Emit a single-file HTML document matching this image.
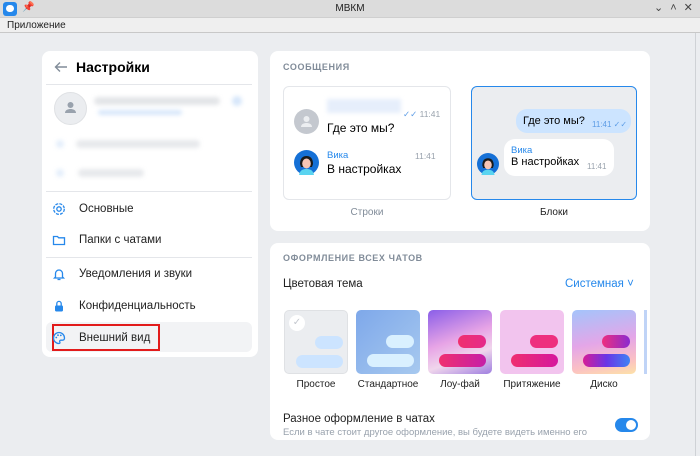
<!DOCTYPE html>
<html><head><meta charset="utf-8"><style>
*{box-sizing:border-box;margin:0;padding:0}
body{width:700px;height:456px;overflow:hidden;font-family:"Liberation Sans","DejaVu Sans",sans-serif;background:#ebedf0;position:relative;color:#000}
.abs{position:absolute}
.title{left:0;top:0;width:700px;height:18px;background:#dcdcdc;border-bottom:1px solid #cfcfcf}
.menu{left:0;top:18px;width:700px;height:15px;background:#efefef;border-bottom:1px solid #c8c8c8;font-size:10px;color:#222;padding:2px 7px}
.card{background:#fff;border-radius:8px}
.sec{font-size:9px;font-weight:bold;color:#818c99;letter-spacing:.6px}
.item{left:52px;font-size:11.5px;color:#222;display:flex;align-items:center;gap:13px}
.item svg{width:14px;height:14px}
.hr{height:1px;background:#e4e6ea}
.th{width:64px;height:64px;border-radius:5px;top:310px;overflow:hidden}
.pill{position:absolute;border-radius:8px;height:13px}
.lbl{font-size:10px;color:#222;top:379px;width:80px;text-align:center}
</style></head><body>
<div class="abs title">
 <div class="abs" style="left:3px;top:2px;width:14px;height:14px;background:#2688eb;border-radius:3px"><div class="abs" style="left:3px;top:3px;width:8px;height:7px;background:#fff;border-radius:4px"></div></div>
 <div class="abs" style="left:22px;top:2px;font-size:10px">📌</div>
 <div class="abs" style="left:0;width:700px;top:3px;text-align:center;font-size:10px;color:#222">МВКМ</div>
 <div class="abs" style="left:654px;top:1px;font-size:11px;color:#444;letter-spacing:7px">⌄˄✕</div>
</div>
<div class="abs menu">Приложение</div>
<div class="abs" style="left:695px;top:33px;width:1px;height:423px;background:#cfd2d6"></div>

<div class="abs card" style="left:42px;top:51px;width:216px;height:306px"></div>
<svg class="abs" style="left:54px;top:60px" width="14" height="14" viewBox="0 0 14 14"><path d="M13 7H2M6 2.5 1.5 7 6 11.5" fill="none" stroke="#818c99" stroke-width="1.4"/></svg>
<div class="abs" style="left:76px;top:59px;font-size:14px;font-weight:bold">Настройки</div>
<div class="abs hr" style="left:46px;top:84px;width:206px"></div>
<div class="abs" style="left:54px;top:92px;width:33px;height:33px;border-radius:50%;background:#ebedf0;border:1px solid #dfe1e4"></div>
<svg class="abs" style="left:63px;top:100px" width="15" height="15" viewBox="0 0 15 15"><circle cx="7.5" cy="5" r="3" fill="#99a2ad"/><path d="M2 13c0-3 3-4 5.5-4s5.5 1 5.5 4z" fill="#99a2ad"/></svg>
<div class="abs" style="left:94px;top:97px;width:126px;height:8px;background:#e3e5e8;border-radius:4px;filter:blur(2px)"></div>
<div class="abs" style="left:98px;top:110px;width:84px;height:5px;background:#d6e6fa;border-radius:3px;filter:blur(2px)"></div>
<div class="abs" style="left:232px;top:96px;width:10px;height:10px;background:#d6e6fa;border-radius:50%;filter:blur(2px)"></div>
<div class="abs" style="left:76px;top:140px;width:124px;height:8px;background:#e7e9ec;border-radius:4px;filter:blur(2px)"></div>
<div class="abs" style="left:78px;top:169px;width:66px;height:8px;background:#e7e9ec;border-radius:4px;filter:blur(2px)"></div>
<div class="abs" style="left:56px;top:140px;width:8px;height:8px;background:#e3eefb;border-radius:50%;filter:blur(2px)"></div>
<div class="abs" style="left:56px;top:169px;width:8px;height:8px;background:#e3eefb;border-radius:50%;filter:blur(2px)"></div>
<div class="abs hr" style="left:46px;top:191px;width:206px"></div>
<div class="abs item" style="top:202px"><svg viewBox="0 0 14 14"><circle cx="7" cy="7" r="2.2" fill="none" stroke="#2688eb" stroke-width="1.3"/><circle cx="7" cy="7" r="5.3" fill="none" stroke="#2688eb" stroke-width="1.3" stroke-dasharray="3 1.2"/></svg>Основные</div>
<div class="abs item" style="top:233px"><svg viewBox="0 0 14 14"><path d="M1.5 3.5h4l1.2 1.3h5.8v6.7h-11z" fill="none" stroke="#2688eb" stroke-width="1.3"/></svg>Папки с чатами</div>
<div class="abs hr" style="left:46px;top:257px;width:206px"></div>
<div class="abs item" style="top:267px"><svg viewBox="0 0 14 14"><path d="M3.5 10V6.5a3.5 3.5 0 0 1 7 0V10l1 1h-9zM5.5 12.5h3" fill="none" stroke="#2688eb" stroke-width="1.3"/></svg>Уведомления и звуки</div>
<div class="abs item" style="top:299px"><svg viewBox="0 0 14 14"><rect x="3" y="6.5" width="8" height="6" rx="1.2" fill="#2688eb"/><path d="M4.8 6.5V4.6a2.2 2.2 0 0 1 4.4 0v1.9" fill="none" stroke="#2688eb" stroke-width="1.3"/></svg>Конфиденциальность</div>
<div class="abs" style="left:46px;top:322px;width:206px;height:30px;background:#f2f3f5;border-radius:6px"></div>
<div class="abs" style="left:52px;top:324px;width:108px;height:27px;border:2px solid #e21b1b"></div>
<div class="abs item" style="top:331px"><svg viewBox="0 0 14 14"><path d="M7 1.5a5.5 5.5 0 1 0 0 11c1 0 1.2-.8.8-1.5-.5-.8 0-1.8 1-1.8h1.6c1.3 0 2.1-.9 2.1-2.2C12.5 4 10 1.5 7 1.5z" fill="none" stroke="#2688eb" stroke-width="1.3"/><circle cx="4.3" cy="6.5" r=".9" fill="#2688eb"/><circle cx="6" cy="4.2" r=".9" fill="#2688eb"/><circle cx="8.8" cy="4.4" r=".9" fill="#2688eb"/></svg>Внешний вид</div>

<div class="abs card" style="left:270px;top:51px;width:380px;height:180px"></div>
<div class="abs sec" style="left:283px;top:62px">СООБЩЕНИЯ</div>
<div class="abs" style="left:283px;top:86px;width:168px;height:114px;border:1px solid #e4e6ea;border-radius:6px"></div>
<div class="abs" style="left:294px;top:109px;width:25px;height:25px;border-radius:50%;background:#c4c8cf"></div>
<svg class="abs" style="left:299px;top:114px" width="15" height="15" viewBox="0 0 15 15"><circle cx="7.5" cy="5" r="3" fill="#eceef1"/><path d="M2 13c0-3 3-4 5.5-4s5.5 1 5.5 4z" fill="#eceef1"/></svg>
<div class="abs" style="left:327px;top:99px;width:74px;height:14px;background:#e6eefb;filter:blur(2px)"></div>
<div class="abs" style="left:403px;top:109px;font-size:8.5px;color:#99a2ad"><span style="color:#5c9ce6">✓✓</span> 11:41</div>
<div class="abs" style="left:327px;top:121px;font-size:12px">Где это мы?</div>
<svg class="abs" style="left:294px;top:150px" width="25" height="25" viewBox="0 0 25 25"><circle cx="12.5" cy="12.5" r="12.5" fill="#1570d6"/><path d="M5 25c1-5 4-6 7.5-6s6.5 1 7.5 6z" fill="#5ad4f0"/><path d="M6 14c0-6 3-8 6.5-8s6.5 2 6.5 8l-1 3H7z" fill="#1a1a1a"/><ellipse cx="12.5" cy="13.5" rx="4.3" ry="5" fill="#f6c5b5"/></svg>
<div class="abs" style="left:327px;top:150px;font-size:9.5px;color:#2688eb">Вика</div>
<div class="abs" style="left:415px;top:151px;font-size:8.5px;color:#99a2ad">11:41</div>
<div class="abs" style="left:327px;top:162px;font-size:12px">В настройках</div>
<div class="abs" style="left:283px;top:207px;width:168px;text-align:center;font-size:10px;color:#818c99">Строки</div>

<div class="abs" style="left:471px;top:86px;width:166px;height:114px;border:1.5px solid #2688eb;border-radius:6px;background:#ebedf0"></div>
<div class="abs" style="left:516px;top:109px;width:115px;height:24px;border-radius:11px;background:#cce4ff"></div>
<div class="abs" style="left:523px;top:115px;font-size:11px">Где это мы?</div>
<div class="abs" style="left:592px;top:120px;font-size:8px;color:#5c9ce6">11:41 ✓✓</div>
<div class="abs" style="left:504px;top:139px;width:110px;height:37px;border-radius:11px;background:#fff"></div>
<div class="abs" style="left:511px;top:145px;font-size:9.5px;color:#2688eb">Вика</div>
<div class="abs" style="left:511px;top:156px;font-size:11px">В настройках</div>
<div class="abs" style="left:587px;top:162px;font-size:8px;color:#99a2ad">11:41</div>
<svg class="abs" style="left:477px;top:153px" width="22" height="22" viewBox="0 0 25 25"><circle cx="12.5" cy="12.5" r="12.5" fill="#1570d6"/><path d="M5 25c1-5 4-6 7.5-6s6.5 1 7.5 6z" fill="#5ad4f0"/><path d="M6 14c0-6 3-8 6.5-8s6.5 2 6.5 8l-1 3H7z" fill="#1a1a1a"/><ellipse cx="12.5" cy="13.5" rx="4.3" ry="5" fill="#f6c5b5"/></svg>
<div class="abs" style="left:471px;top:207px;width:166px;text-align:center;font-size:10px;color:#222">Блоки</div>

<div class="abs card" style="left:270px;top:243px;width:380px;height:197px"></div>
<div class="abs sec" style="left:283px;top:253px">ОФОРМЛЕНИЕ ВСЕХ ЧАТОВ</div>
<div class="abs" style="left:283px;top:278px;font-size:11.5px;color:#222">Цветовая тема</div>
<div class="abs" style="left:565px;top:278px;font-size:11.5px;color:#2688eb">Системная ˅</div>

<div class="abs th" style="left:284px;background:#ebedf0;border:1px solid #dfe1e4"><div class="abs" style="left:4px;top:4px;width:16px;height:16px;border-radius:50%;background:#fff;color:#c4c8cf;font-size:10px;text-align:center;line-height:16px">✓</div><div class="pill" style="left:30px;top:25px;width:28px;background:#cce4ff"></div><div class="pill" style="left:11px;top:44px;width:47px;background:#cce4ff"></div></div>
<div class="abs th" style="left:356px;background:linear-gradient(135deg,#7ea8ea,#a7c9ef)"><div class="pill" style="left:30px;top:25px;width:28px;background:#d9f0ff"></div><div class="pill" style="left:11px;top:44px;width:47px;background:#d9f0ff"></div></div>
<div class="abs th" style="left:428px;background:linear-gradient(160deg,#8a5ee8,#e7a4e6 45%,#f0d6ec 70%,#9f7fe0)"><div class="pill" style="left:30px;top:25px;width:28px;background:linear-gradient(90deg,#f0306f,#e52a8a)"></div><div class="pill" style="left:11px;top:44px;width:47px;background:linear-gradient(90deg,#f0306f,#c51fa8)"></div></div>
<div class="abs th" style="left:500px;background:#f2c4ee"><div class="pill" style="left:30px;top:25px;width:28px;background:#ee2f7e"></div><div class="pill" style="left:11px;top:44px;width:47px;background:linear-gradient(90deg,#ef2f6f,#d5179e)"></div></div>
<div class="abs th" style="left:572px;background:linear-gradient(170deg,#a4c4fb,#e4a6e8 50%,#fbc0c4 80%,#fde2a8)"><div class="pill" style="left:30px;top:25px;width:28px;background:linear-gradient(90deg,#ee2f7e,#8a2ad0)"></div><div class="pill" style="left:11px;top:44px;width:47px;background:linear-gradient(90deg,#d61c97,#6a35e6,#3f83f5)"></div></div>
<div class="abs" style="left:644px;top:310px;width:3px;height:64px;background:#c0d4f7"></div>
<div class="abs lbl" style="left:276px">Простое</div>
<div class="abs lbl" style="left:348px">Стандартное</div>
<div class="abs lbl" style="left:420px">Лоу-фай</div>
<div class="abs lbl" style="left:492px">Притяжение</div>
<div class="abs lbl" style="left:564px">Диско</div>

<div class="abs" style="left:283px;top:413px;font-size:11.5px;color:#222">Разное оформление в чатах</div>
<div class="abs" style="left:283px;top:427px;font-size:9.5px;color:#99a2ad;white-space:nowrap">Если в чате стоит другое оформление, вы будете видеть именно его</div>
<div class="abs" style="left:615px;top:418px;width:23px;height:14px;border-radius:7px;background:#2688eb"><div class="abs" style="left:11px;top:2px;width:10px;height:10px;border-radius:50%;background:#fff"></div></div>
<div class="abs" style="left:270px;top:440px;width:380px;height:16px;background:#ebedf0"></div>
</body></html>
